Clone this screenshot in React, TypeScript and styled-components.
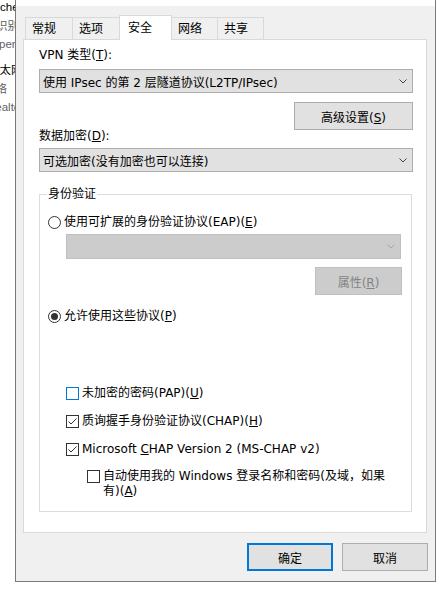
import React from 'react';
import styled, { createGlobalStyle } from 'styled-components';

const GlobalStyle = createGlobalStyle`
  html, body {
    margin: 0;
    padding: 0;
    background: #fff;
  }
  body {
    font-family: "DejaVu Sans", "Noto Sans CJK SC", sans-serif;
    font-size: 12px;
    color: #000;
  }
  * {
    box-sizing: border-box;
  }
`;

const Screen = styled.div`
  width: 443px;
  height: 595px;
  display: flex;
  align-items: flex-start;
  overflow: hidden;
  background: #fff;
`;

// the connections window that peeks out to the left of the dialog
const Behind = styled.div`
  width: 15px;
  flex: none;
  overflow: hidden;
  margin-top: -2px;
  font-family: "Liberation Sans", "Noto Sans CJK SC", sans-serif;
  font-size: 11.5px;
`;

const BehindItem = styled.div`
  margin-bottom: 7.5px;
`;

const BehindLine = styled.div<{ $shift: number; $muted?: boolean }>`
  white-space: nowrap;
  line-height: 18.5px;
  margin-left: ${({ $shift }) => -$shift}px;
  color: ${({ $muted }) => ($muted ? '#5f5f5f' : '#000')};
`;

const Dialog = styled.div`
  width: 421px;
  height: 582px;
  flex: none;
  display: flex;
  flex-direction: column;
  background: #f0f0f0;
  border: 1px solid #7a7a7a;
  border-top: none;
`;

const TitleEdge = styled.div`
  height: 6px;
  background: #fff;
`;

const Body = styled.div`
  flex: 1;
  display: flex;
  flex-direction: column;
  padding: 9px 8px 10px 7px;
`;

const TabStrip = styled.div`
  height: 25px;
  display: flex;
  align-items: flex-end;
  padding-left: 2px;
  margin-bottom: -1px;
  position: relative;
  z-index: 1;
`;

const Tab = styled.div<{ $active?: boolean; $width: number }>`
  width: ${({ $width }) => $width}px;
  height: ${({ $active }) => ($active ? 25 : 22)}px;
  margin-bottom: ${({ $active }) => ($active ? 0 : 1)}px;
  padding-left: ${({ $active }) => ($active ? 8 : 6)}px;
  padding-top: ${({ $active }) => ($active ? 4 : 3)}px;
  line-height: 16px;
  background: ${({ $active }) => ($active ? '#fff' : '#f0f0f0')};
  border: 1px solid #d9d9d9;
  border-bottom: none;
  white-space: nowrap;

  & + & {
    margin-left: -1px;
  }
`;

const Panel = styled.div`
  height: 494px;
  display: flex;
  flex-direction: column;
  background: #fff;
  border: 1px solid #d9d9d9;
  padding: 7px 13px 20px 15px;
`;

const Label = styled.div<{ $pull?: number }>`
  line-height: 16px;
  margin-top: ${({ $pull }) => $pull || 0}px;
  white-space: nowrap;
`;

const Combo = styled.div<{ $disabled?: boolean; $top: number }>`
  height: ${({ $disabled }) => ($disabled ? 25 : 24)}px;
  margin-top: ${({ $top }) => $top}px;
  display: flex;
  align-items: center;
  justify-content: space-between;
  padding: 0 5px 0 3px;
  background: ${({ $disabled }) => ($disabled ? '#cccccc' : '#e1e1e1')};
  border: 1px solid ${({ $disabled }) => ($disabled ? '#bfbfbf' : '#adadad')};
  white-space: nowrap;

  svg {
    flex: none;
  }
`;

const Button = styled.div<{ $width: number; $default?: boolean; $disabled?: boolean }>`
  width: ${({ $width }) => $width}px;
  height: 28px;
  display: flex;
  align-items: center;
  justify-content: center;
  background: ${({ $disabled }) => ($disabled ? '#cccccc' : '#e1e1e1')};
  border: ${({ $default, $disabled }) =>
    $default ? '2px solid #0078d7' : `1px solid ${$disabled ? '#bfbfbf' : '#adadad'}`};
  color: ${({ $disabled }) => ($disabled ? '#838383' : '#000')};
  white-space: nowrap;
`;

const AdvancedButton = styled(Button)`
  align-self: flex-end;
  margin-top: 9px;
`;

const Group = styled.fieldset`
  flex: 1;
  display: flex;
  flex-direction: column;
  min-width: 0;
  margin: 14px 1px 0 0;
  padding: 0 10px 0 0;
  border: 1px solid #dcdcdc;
`;

const Legend = styled.legend`
  margin-left: 7px;
  padding: 0 1px;
  line-height: 16px;
`;

const Option = styled.div<{ $top: number; $indent: number }>`
  display: flex;
  align-items: flex-start;
  margin-top: ${({ $top }) => $top}px;
  margin-left: ${({ $indent }) => $indent}px;
  line-height: 16px;
`;

const OptionText = styled.div<{ $wrap?: boolean }>`
  line-height: ${({ $wrap }) => ($wrap ? 15 : 16)}px;
  white-space: nowrap;
`;

const RadioMark = styled.span<{ $checked?: boolean }>`
  width: 13px;
  height: 13px;
  flex: none;
  margin: 2px 3px 0 0;
  border: 1px solid #333;
  border-radius: 50%;
  background: #fff;
  display: flex;
  align-items: center;
  justify-content: center;

  &::after {
    content: '';
    display: ${({ $checked }) => ($checked ? 'block' : 'none')};
    width: 7px;
    height: 7px;
    border-radius: 50%;
    background: #333;
  }
`;

const CheckMark = styled.span<{ $focus?: boolean; $nudge: number }>`
  width: 13px;
  height: 13px;
  flex: none;
  margin: ${({ $nudge }) => $nudge}px 3px 0 0;
  border: 1px solid ${({ $focus }) => ($focus ? '#0078d7' : '#333')};
  background: #fff;
  display: flex;
  align-items: center;
  justify-content: center;
`;

const DisabledCombo = styled(Combo)`
  margin-left: 26px;
  margin-right: 0;
`;

const PropsButton = styled(Button)`
  align-self: flex-end;
  margin-top: 8px;
  margin-right: -1px;
`;

const Footer = styled.div`
  display: flex;
  justify-content: flex-end;
  gap: 9px;
  margin-top: 10px;
  margin-right: -1px;
`;

const Chevron = ({ color }: { color: string }) => (
  <svg width="8" height="5" viewBox="0 0 8 5">
    <path d="M0.5 0.5 L4 4 L7.5 0.5" fill="none" stroke={color} strokeWidth="1" />
  </svg>
);

const Check = () => (
  <svg width="11" height="11" viewBox="0 0 11 11">
    <path d="M1.5 5.5 L4 8 L9.5 2.5" fill="none" stroke="#333" strokeWidth="1" />
  </svg>
);

const tabs = [
  { name: '常规', width: 48 },
  { name: '选项', width: 48 },
  { name: '安全', width: 53, active: true },
  { name: '网络', width: 47 },
  { name: '共享', width: 47 },
];

const behind = [
  [
    { text: 'checkpoint', shift: 0 },
    { text: '识别的网络', shift: 4, muted: true },
    { text: 'perf', shift: 1, muted: true },
  ],
  [
    { text: '以太网', shift: 12 },
    { text: '网络', shift: 16, muted: true },
    { text: 'Realtek PCIe', shift: 13, muted: true },
  ],
];

export default function App() {
  return (
    <>
      <GlobalStyle />
      <Screen>
        <Behind>
          {behind.map((item, i) => (
            <BehindItem key={i}>
              {item.map((line, j) => (
                <BehindLine key={j} $shift={line.shift} $muted={line.muted}>
                  {line.text}
                </BehindLine>
              ))}
            </BehindItem>
          ))}
        </Behind>

        <Dialog>
          <TitleEdge />
          <Body>
            <TabStrip>
              {tabs.map((t) => (
                <Tab key={t.name} $width={t.width} $active={t.active}>
                  {t.name}
                </Tab>
              ))}
            </TabStrip>

            <Panel>
              <Label>VPN 类型(<u>T</u>):</Label>
              <Combo $top={6}>
                <span>使用 IPsec 的第 2 层隧道协议(L2TP/IPsec)</span>
                <Chevron color="#444" />
              </Combo>
              <AdvancedButton $width={119}>
                <span>高级设置(<u>S</u>)</span>
              </AdvancedButton>
              <Label $pull={-2}>数据加密(<u>D</u>):</Label>
              <Combo $top={4}>
                <span>可选加密(没有加密也可以连接)</span>
                <Chevron color="#444" />
              </Combo>

              <Group>
                <Legend>身份验证</Legend>
                <Option $top={12} $indent={8}>
                  <RadioMark />
                  <OptionText>使用可扩展的身份验证协议(EAP)(<u>E</u>)</OptionText>
                </Option>
                <DisabledCombo $disabled $top={4}>
                  <span />
                  <Chevron color="#a6a6a6" />
                </DisabledCombo>
                <PropsButton $width={87} $disabled>
                  <span>属性(<u>R</u>)</span>
                </PropsButton>
                <Option $top={13} $indent={8}>
                  <RadioMark $checked />
                  <OptionText>允许使用这些协议(<u>P</u>)</OptionText>
                </Option>

                <Option $top={61} $indent={26}>
                  <CheckMark $focus $nudge={2} />
                  <OptionText>未加密的密码(PAP)(<u>U</u>)</OptionText>
                </Option>
                <Option $top={12} $indent={26}>
                  <CheckMark $nudge={2}>
                    <Check />
                  </CheckMark>
                  <OptionText>质询握手身份验证协议(CHAP)(<u>H</u>)</OptionText>
                </Option>
                <Option $top={12} $indent={26}>
                  <CheckMark $nudge={2}>
                    <Check />
                  </CheckMark>
                  <OptionText>
                    Microsoft <u>C</u>HAP Version 2 (MS-CHAP v2)
                  </OptionText>
                </Option>
                <Option $top={12} $indent={47}>
                  <CheckMark $nudge={1} />
                  <OptionText $wrap>
                    自动使用我的 Windows 登录名称和密码(及域，如果
                    <br />
                    有)(<u>A</u>)
                  </OptionText>
                </Option>
              </Group>
            </Panel>

            <Footer>
              <Button $width={86} $default>
                确定
              </Button>
              <Button $width={86}>取消</Button>
            </Footer>
          </Body>
        </Dialog>
      </Screen>
    </>
  );
}
